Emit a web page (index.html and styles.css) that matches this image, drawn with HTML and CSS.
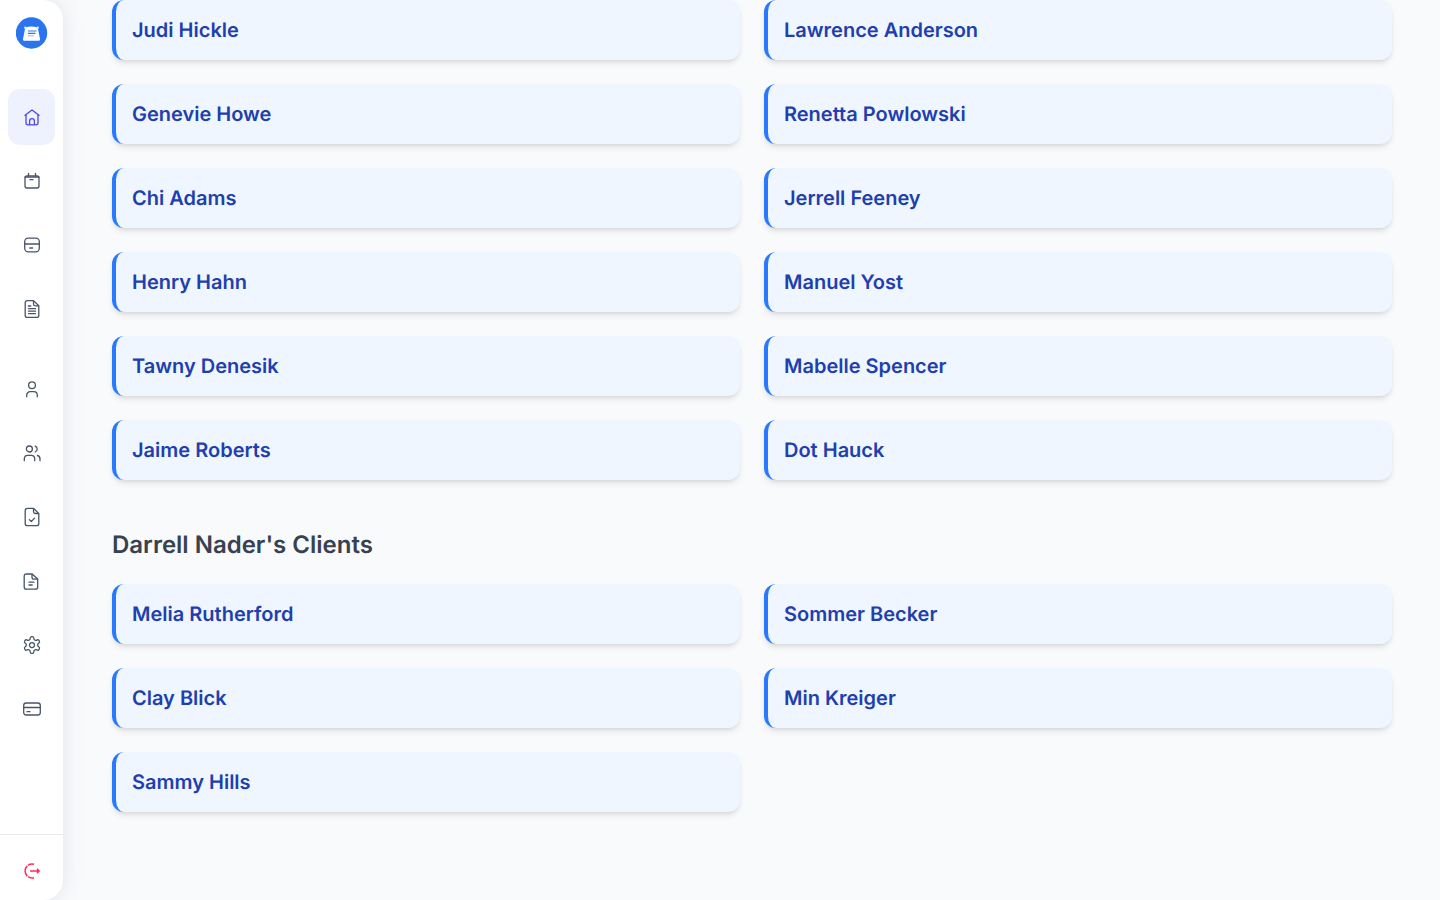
FILE: index.html
```html
<!DOCTYPE html>
<html lang="en">
<head>
<meta charset="utf-8">
<title>Clients</title>
<link rel="stylesheet" href="styles.css">
</head>
<body>
<div class="layout">
  <aside class="sidebar">
    <div class="logo">
      <svg width="32" height="32" viewBox="0 0 32 32"><circle cx="15.500" cy="16" r="15.700" fill="#2b74f0"/><path d="M9.300 10.400c4-1.300 8.400-1.300 12.400 0L24 22c.2 1-.5 1.800-1.500 1.800h-14c-1 0-1.700-.8-1.500-1.800z" fill="#fff"/><circle cx="9.200" cy="10.600" r="1.200" fill="#dbe8fd"/><circle cx="21.800" cy="10.600" r="1.200" fill="#dbe8fd"/><path d="M12 14h8.500M12 16.400h7.500" stroke="#2b74f0" stroke-width="1.100" fill="none"/><path d="M12 18.800h6" stroke="#9cc0f7" stroke-width="1.100" fill="none"/></svg>
    </div>
    <nav class="nav">
      <div class="nav-group">
        <a class="nav-item active"><svg class="icon" viewBox="0 0 20 20"><path d="M3 8.300 10 3l7 5.300M4 7.700v8.100c0 1.300.8 2 2 2h8c1.200 0 2-.7 2-2V7.700M7.600 17.800v-3.600c0-1.500 1-2.500 2.400-2.500s2.400 1 2.400 2.500v3.600"/></svg></a>
        <a class="nav-item"><svg class="icon" viewBox="0 0 20 20"><rect x="3" y="5" width="14" height="12" rx="2"/><path d="M6.500 2.300V5M13.500 2.300V5M3 6.200h14M8 8.700h3"/></svg></a>
        <a class="nav-item"><svg class="icon" viewBox="0 0 20 20"><rect x="2.700" y="3.200" width="14.600" height="13.600" rx="3.500"/><path d="M2.700 9h14.600M7.800 13h2.800"/></svg></a>
        <a class="nav-item"><svg class="icon" viewBox="0 0 20 20"><path d="M3.200 3.800c0-1.400.8-2.200 2.200-2.200h6.100l5.300 5.200v9.400c0 1.400-.8 2.200-2.200 2.200H5.400c-1.400 0-2.200-.8-2.200-2.200zM11.500 1.600v3.400c0 1.100.7 1.800 1.800 1.800h3.500M6.300 7h2.500M6.500 9.700h7M6.500 12.200h7M6.500 14.700h7"/></svg></a>
      </div>
      <div class="nav-group">
        <a class="nav-item"><svg class="icon" viewBox="0 0 20 20"><circle cx="10" cy="6.300" r="3.400"/><path d="M4.700 17.800v-1.500c0-2.200 1.500-3.600 3.500-3.600h3.600c2 0 3.500 1.400 3.500 3.600v1.500"/></svg></a>
        <a class="nav-item"><svg class="icon" viewBox="0 0 20 20"><circle cx="7.400" cy="6" r="3"/><path d="M13.200 3.200c1.300.5 2 1.600 2 2.900s-.7 2.400-2 2.900M2.300 17.700v-1.600c0-2.300 1.500-3.700 3.500-3.700h3.300c2 0 3.600 1.400 3.600 3.700v1.600M15.500 12.500c1.500.4 2.500 1.700 2.500 3.500v1.700"/></svg></a>
        <a class="nav-item"><svg class="icon" viewBox="0 0 20 20"><path d="M3.200 3.500c0-1.400.8-2.200 2.200-2.200h6.100l5.300 5.200v10c0 1.400-.8 2.200-2.200 2.200H5.400c-1.400 0-2.200-.8-2.200-2.200zM11.500 1.300v3.400c0 1.100.7 1.800 1.800 1.800h3.500M7.300 12.600l2 1.900 3.300-3.400"/></svg></a>
        <a class="nav-item nudge"><svg class="icon" viewBox="0 0 20 20"><path d="M3.200 5.200c0-1.400.8-2.200 2.200-2.200h5.800l5.500 5.100v7.800c0 1.400-.8 2.200-2.200 2.200H5.400c-1.400 0-2.200-.8-2.200-2.200zM11 3v3.200c0 1.200.7 1.900 1.900 1.900h3.600M8 11.200h5M8 14h3.200"/></svg></a>
        <a class="nav-item"><svg class="icon" viewBox="0 0 24 24"><path class="thin" d="M12.220 2h-.44a2 2 0 0 0-2 2v.18a2 2 0 0 1-1 1.730l-.43.250a2 2 0 0 1-2 0l-.15-.080a2 2 0 0 0-2.730.730l-.22.380a2 2 0 0 0 .730 2.730l.15.100a2 2 0 0 1 1 1.720v.510a2 2 0 0 1-1 1.740l-.15.090a2 2 0 0 0-.730 2.730l.22.380a2 2 0 0 0 2.730.730l.15-.080a2 2 0 0 1 2 0l.43.250a2 2 0 0 1 1 1.730V20a2 2 0 0 0 2 2h.44a2 2 0 0 0 2-2v-.18a2 2 0 0 1 1-1.730l.43-.250a2 2 0 0 1 2 0l.15.080a2 2 0 0 0 2.730-.730l.22-.390a2 2 0 0 0-.730-2.730l-.15-.080a2 2 0 0 1-1-1.740v-.5a2 2 0 0 1 1-1.740l.15-.090a2 2 0 0 0 .730-2.730l-.22-.380a2 2 0 0 0-2.730-.730l-.15.080a2 2 0 0 1-2 0l-.43-.250a2 2 0 0 1-1-1.730V4a2 2 0 0 0-2-2z"/><circle class="thin" cx="12" cy="12" r="3"/></svg></a>
        <a class="nav-item"><svg class="icon" viewBox="0 0 20 20"><rect x="1.700" y="4" width="16.600" height="12" rx="2.500"/><path d="M1.700 8.500h16.600M5 12.700h3"/></svg></a>
      </div>
    </nav>
    <div class="sidebar-foot">
      <svg class="icon logout" viewBox="0 0 20 20"><path d="M12 3.300A7 7 0 0 0 6 4.300M5.300 4.900A7 7 0 0 0 5.300 15.100M6 15.700A7 7 0 0 0 12 16.700M8 10h9M15 7.900 17.200 10 15 12.100"/></svg>
    </div>
  </aside>
  <main class="main">
    <section class="client-grid">
      <div class="card">Judi Hickle</div>
      <div class="card">Lawrence Anderson</div>
      <div class="card">Genevie Howe</div>
      <div class="card">Renetta Powlowski</div>
      <div class="card">Chi Adams</div>
      <div class="card">Jerrell Feeney</div>
      <div class="card">Henry Hahn</div>
      <div class="card">Manuel Yost</div>
      <div class="card">Tawny Denesik</div>
      <div class="card">Mabelle Spencer</div>
      <div class="card">Jaime Roberts</div>
      <div class="card">Dot Hauck</div>
    </section>
    <h2 class="section-title">Darrell Nader's Clients</h2>
    <section class="client-grid">
      <div class="card">Melia Rutherford</div>
      <div class="card">Sommer Becker</div>
      <div class="card">Clay Blick</div>
      <div class="card">Min Kreiger</div>
      <div class="card">Sammy Hills</div>
    </section>
  </main>
</div>
</body>
</html>
```
FILE: styles.css
```css
* { box-sizing: border-box; }
html, body { margin: 0; height: 100%; overflow: hidden; }
body { background: #f9fafc; font-family: Inter, "Liberation Sans", sans-serif; text-rendering: geometricPrecision; }
.layout { display: flex; height: 900px; }
.sidebar {
  width: 63px; flex: none; height: 900px; background: #fff;
  border-radius: 0 20px 20px 0;
  box-shadow: 0 0 20px rgba(100, 116, 139, 0.17);
  display: flex; flex-direction: column;
}
.logo { height: 89px; padding: 17px 0 0 16px; }
.logo svg { display: block; }
.nav { flex: 1; display: flex; flex-direction: column; gap: 24px; padding-left: 8px; }
.nav-group { display: flex; flex-direction: column; gap: 8px; }
.nav-item { width: 47px; height: 56px; display: flex; align-items: center; justify-content: center; border-radius: 12px; }
.nav-item.active { background: #eef2ff; }
.nav-item.active .icon { stroke: #4f46e5; }
.nudge .icon { transform: translateX(-1px); }
.icon { width: 20px; height: 20px; display: block; fill: none; stroke: #475569; stroke-width: 1.3; stroke-linecap: round; stroke-linejoin: round; }
.icon .thin { stroke-width: 1.500; }
.sidebar-foot { height: 66px; border-top: 1px solid #e8eaf0; display: flex; align-items: center; justify-content: center; }
.logout { stroke: #fb2c5c; stroke-width: 1.500; stroke-linecap: butt; transform: translateY(3px); }
.main { flex: 1; min-width: 0; padding: 0 48px 0 49px; }
.client-grid { display: grid; grid-template-columns: 628px 628px; column-gap: 24px; row-gap: 24px; }
.card {
  height: 60px; display: flex; align-items: center;
  padding-left: 16px; background: #eff6ff;
  border-left: 4px solid #2979ff; border-radius: 12px;
  box-shadow: 0 4px 6px -1px rgba(0, 0, 0, 0.1), 0 2px 4px -2px rgba(0, 0, 0, 0.1);
  color: #1e40af; font-size: 20px; font-weight: 600; line-height: 28px;
}
.section-title { margin: 49px 0 23px; height: 32px; font-size: 24px; line-height: 32px; font-weight: 600; color: #374151; }
```
